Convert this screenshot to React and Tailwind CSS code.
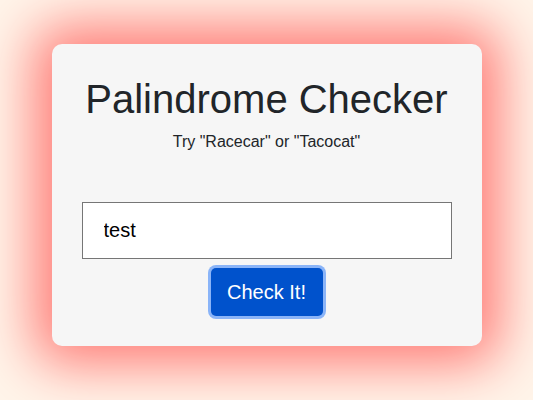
import React, { useState } from 'react';

const App = () => {
  const [text, setText] = useState('test');

  return (
    <div className="min-h-[400px] w-full bg-[#fff5ea] flex justify-center pt-[44px] font-['Liberation_Sans',Arial,sans-serif]">
      <div className="w-[430px] h-[302px] bg-[#f6f6f6] rounded-[10px] px-[30px] pt-[30px] pb-[30px] flex flex-col items-center shadow-[0_0_55px_18px_#ff7a75]">
        <h1 className="text-[40px] leading-[50px] text-[#212529] text-center">Palindrome Checker</h1>
        <p className="mt-2 text-[16px] leading-[20px] text-[#212529] text-center">Try "Racecar" or "Tacocat"</p>
        <input
          type="text"
          value={text}
          onChange={(e) => setText(e.target.value)}
          className="mt-[50px] w-full h-[57px] border border-[#767676] bg-white px-[21px] text-[20px] text-black outline-none"
        />
        <button className="mt-[9px] w-[112px] h-[48px] rounded-[5px] bg-[#0052cc] text-white text-[20px] ring-[3px] ring-[#8ab4f8]">
          Check It!
        </button>
      </div>
    </div>
  );
};

export default App;
